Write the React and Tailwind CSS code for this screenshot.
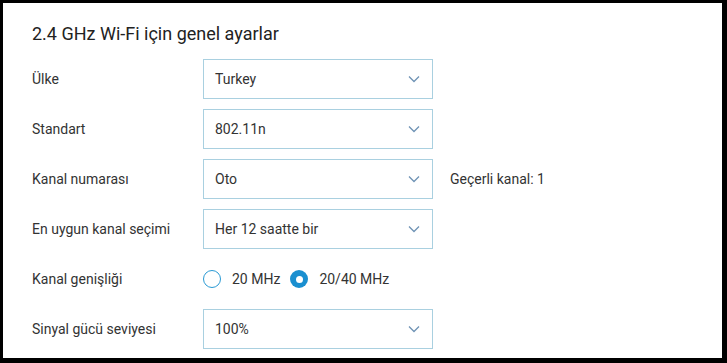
import React from "react";

function Chevron() {
  return (
    <svg width="12" height="8" viewBox="0 0 12 8" className="shrink-0">
      <path d="M1 1.5 L6 6.5 L11 1.5" fill="none" stroke="#6f93b5" strokeWidth="1.3" />
    </svg>
  );
}

function Select({ value }) {
  return (
    <div className="w-[230px] h-[40px] border border-[#a9d0e0] flex items-center justify-between pl-[11px] pr-[12px] text-[14px] text-[#333]">
      <span>{value}</span>
      <Chevron />
    </div>
  );
}

function Row({ label, children }) {
  return (
    <div className="flex items-center h-[40px]">
      <div className="w-[171px] text-[14px] text-[#333]">{label}</div>
      {children}
    </div>
  );
}

export default function App() {
  return (
    <div
      className="w-[727px] h-[363px] bg-black pt-[3px] pl-[3px] pr-[5px] pb-[5px]"
      style={{ fontFamily: "Roboto, 'Liberation Sans', sans-serif" }}
    >
      <div className="w-full h-full bg-white pl-[29px] pt-[19px] overflow-hidden">
        <h2 className="text-[18px] text-[#222] leading-[24px]">2.4 GHz Wi-Fi için genel ayarlar</h2>
        <div className="flex flex-col gap-[10px] mt-[13px]">
          <Row label="Ülke">
            <Select value="Turkey" />
          </Row>
          <Row label="Standart">
            <Select value="802.11n" />
          </Row>
          <Row label="Kanal numarası">
            <Select value="Oto" />
            <span className="ml-[17px] text-[14px] text-[#333]">Geçerli kanal: 1</span>
          </Row>
          <Row label="En uygun kanal seçimi">
            <Select value="Her 12 saatte bir" />
          </Row>
          <Row label="Kanal genişliği">
            <div className="flex items-center text-[14px] text-[#333]">
              <span className="w-[18px] h-[18px] rounded-full border border-[#2a9ad4] bg-white" />
              <span className="ml-[11px]">20 MHz</span>
              <span className="ml-[10px] w-[18px] h-[18px] rounded-full bg-[#1a8fd0] flex items-center justify-center">
                <span className="w-[7px] h-[7px] rounded-full bg-white" />
              </span>
              <span className="ml-[11px]">20/40 MHz</span>
            </div>
          </Row>
          <Row label="Sinyal gücü seviyesi">
            <Select value="100%" />
          </Row>
        </div>
      </div>
    </div>
  );
}
